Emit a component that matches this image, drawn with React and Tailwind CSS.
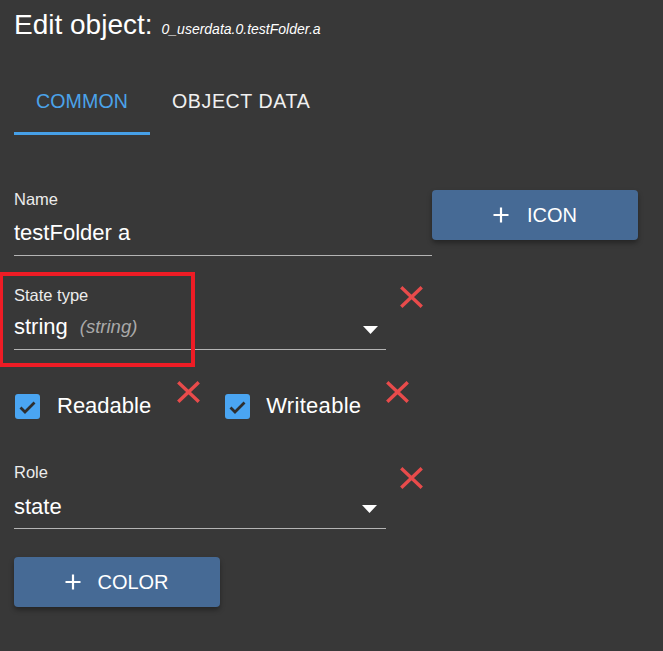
import React from "react";

const XMark = ({ className = "" }) => (
  <svg className={className} width="23" height="22" viewBox="0 0 23 22" fill="none">
    <path d="M2.5 2.5 L20.5 19.5 M20.5 2.5 L2.5 19.5" stroke="#e84b4b" strokeWidth="3.4" strokeLinecap="square" />
  </svg>
);

const Plus = () => (
  <svg width="16" height="16" viewBox="0 0 16 16" fill="none">
    <path d="M8 0.5 V15.5 M0.5 8 H15.5" stroke="#ffffff" strokeWidth="2.2" />
  </svg>
);

const Arrow = () => (
  <svg width="15" height="8" viewBox="0 0 15 8">
    <path d="M0 0 H15 L7.5 8 Z" fill="#ffffff" />
  </svg>
);

const Check = () => (
  <div className="w-[25px] h-[25px] rounded-[3px] bg-[#4aa5f2] flex items-center justify-center shrink-0">
    <svg width="25" height="25" viewBox="0 0 25 25" fill="none">
      <path d="M5.5 13.5 L10 18 L19.5 8.5" stroke="#2e2e2e" strokeWidth="2.8" />
    </svg>
  </div>
);

export default function App() {
  return (
    <div
      className="relative w-[663px] h-[651px] bg-[#383838] overflow-hidden text-white"
      style={{ fontFamily: '"Liberation Sans", Arial, sans-serif' }}
    >
      {/* highlight annotation */}
      <div className="absolute left-[-1px] top-[272px] w-[196px] h-[95px] border-[4px] border-[#ee1c25] pointer-events-none" />

      <div className="pl-[14px]">
        {/* Title */}
        <div className="pt-[9px] flex items-baseline leading-[32px]">
          <span className="text-[28px] text-white">Edit object:</span>
          <span className="ml-[9px] text-[14px] italic text-white">0_userdata.0.testFolder.a</span>
        </div>

        {/* Tabs */}
        <div className="mt-[26px] flex">
          <div className="px-[22px] pt-[18px] pb-[19px] leading-[24px] text-[19.6px] tracking-[0.1px] text-[#4ba3ea] border-b-[3px] border-[#46a0e8]">
            COMMON
          </div>
          <div className="px-[22px] pt-[18px] pb-[19px] leading-[24px] text-[19.6px] tracking-[0.6px] text-[#f0f0f0] border-b-[3px] border-transparent">
            OBJECT DATA
          </div>
        </div>

        {/* Name row */}
        <div className="mt-[54px] flex items-start">
          <div className="w-[418px] border-b border-[#b4b4b4] pb-[8px]">
            <div className="text-[16.5px] leading-[20px] text-[#ececec]">Name</div>
            <div className="mt-[10px] text-[22px] leading-[28px] text-white">testFolder a</div>
          </div>
          <button className="mt-[1px] w-[206px] h-[50px] rounded-[4px] bg-[#466a95] shadow-[0_3px_5px_rgba(0,0,0,0.35)] flex items-center justify-center text-[20px] text-white">
            <Plus />
            <span className="ml-[18px]">ICON</span>
          </button>
        </div>

        {/* State type row */}
        <div className="mt-[29px] flex items-start">
          <div className="w-[372px] border-b border-[#b4b4b4] pb-[8px]">
            <div className="text-[16.5px] leading-[20px] text-[#ececec]">State type</div>
            <div className="mt-[8px] flex items-center">
              <span className="text-[22px] leading-[28px] text-white">string</span>
              <span className="ml-[12px] text-[18.5px] italic text-[#a9a9a9]">(string)</span>
              <span className="ml-auto mr-[8px] mt-[6px] flex">
                <Arrow />
              </span>
            </div>
          </div>
          <XMark className="ml-[14px] mt-[1px]" />
        </div>

        {/* Checkbox row */}
        <div className="mt-[31px] flex items-start">
          <div className="pt-[11px] flex items-center ml-[1px]">
            <Check />
            <span className="ml-[17px] text-[22px] leading-[28px] text-white">Readable</span>
          </div>
          <XMark className="ml-[26px]" />
          <div className="pt-[11px] flex items-center ml-[25px]">
            <Check />
            <span className="ml-[16px] text-[22px] leading-[28px] tracking-[0.3px] text-white">Writeable</span>
          </div>
          <XMark className="ml-[25px]" />
        </div>

        {/* Role row */}
        <div className="mt-[42px] flex items-start">
          <div className="w-[372px] border-b border-[#b4b4b4] pb-[7px]">
            <div className="text-[16.5px] leading-[20px] text-[#ececec]">Role</div>
            <div className="mt-[11px] flex items-center">
              <span className="text-[22px] leading-[28px] text-white">state</span>
              <span className="ml-auto mr-[9px] mt-[4px] flex">
                <Arrow />
              </span>
            </div>
          </div>
          <XMark className="ml-[14px] mt-[5px]" />
        </div>

        {/* Color button */}
        <button className="mt-[28px] w-[206px] h-[50px] rounded-[4px] bg-[#466a95] shadow-[0_3px_5px_rgba(0,0,0,0.35)] flex items-center justify-center text-[20px] text-white">
          <Plus />
          <span className="ml-[16px]">COLOR</span>
        </button>
      </div>
    </div>
  );
}
